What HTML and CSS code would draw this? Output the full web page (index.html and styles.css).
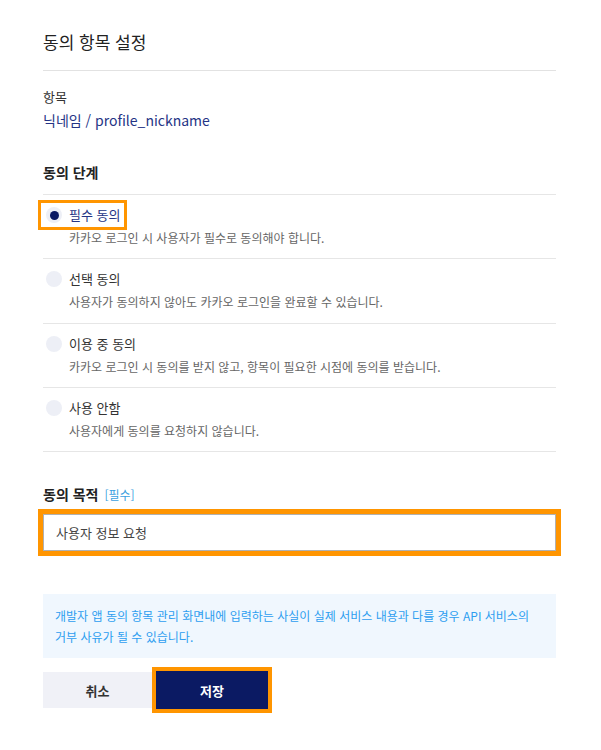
FILE: index.html
```html
<!DOCTYPE html>
<html lang="ko">
<head>
<meta charset="utf-8">
<title>동의 항목 설정</title>
<link rel="stylesheet" href="styles.css">
</head>
<body>
<div class="panel">
  <h1 class="title">동의 항목 설정</h1>

  <div class="item">
    <div class="item-label">항목</div>
    <div class="item-value">닉네임 / profile_nickname</div>
  </div>

  <h2 class="section-title">동의 단계</h2>
  <ul class="options">
    <li class="option">
      <div class="option-head highlight">
        <span class="radio checked"></span>
        <span class="option-title selected">필수 동의</span>
      </div>
      <p class="option-desc">카카오 로그인 시 사용자가 필수로 동의해야 합니다.</p>
    </li>
    <li class="option">
      <div class="option-head">
        <span class="radio"></span>
        <span class="option-title">선택 동의</span>
      </div>
      <p class="option-desc">사용자가 동의하지 않아도 카카오 로그인을 완료할 수 있습니다.</p>
    </li>
    <li class="option">
      <div class="option-head">
        <span class="radio"></span>
        <span class="option-title">이용 중 동의</span>
      </div>
      <p class="option-desc">카카오 로그인 시 동의를 받지 않고, 항목이 필요한 시점에 동의를 받습니다.</p>
    </li>
    <li class="option">
      <div class="option-head">
        <span class="radio"></span>
        <span class="option-title">사용 안함</span>
      </div>
      <p class="option-desc">사용자에게 동의를 요청하지 않습니다.</p>
    </li>
  </ul>

  <h2 class="section-title purpose">동의 목적 <span class="required">[필수]</span></h2>
  <div class="input-wrap">
    <div class="input">사용자 정보 요청</div>
  </div>

  <div class="notice">개발자 앱 동의 항목 관리 화면내에 입력하는 사실이 실제 서비스 내용과 다를 경우 API 서비스의 거부 사유가 될 수 있습니다.</div>

  <div class="actions">
    <button class="btn cancel" type="button">취소</button>
    <button class="btn save" type="button">저장</button>
  </div>
</div>
</body>
</html>
```

FILE: styles.css
```css
* { box-sizing: border-box; }
html, body { margin: 0; padding: 0; background: #fff; }
body {
  font-family: "Noto Sans CJK KR", "Noto Sans", sans-serif;
  color: #222;
}
.panel {
  width: 601px;
  padding: 29px 45px 0 43px;
}
.title {
  margin: 0;
  font-size: 17px;
  font-weight: 400;
  line-height: 26px;
  color: #222;
  padding-bottom: 15px;
  border-bottom: 1px solid #e2e2e2;
}
.item { padding-top: 16px; }
.item-label {
  font-size: 13px;
  line-height: 20px;
  color: #333;
}
.item-value {
  margin-top: 2px;
  font-size: 14px;
  line-height: 22px;
  color: #253485;
}
.section-title {
  margin: 31px 0 0;
  font-size: 14px;
  font-weight: 700;
  line-height: 20px;
  color: #222;
  padding-bottom: 12px;
}
.options {
  list-style: none;
  margin: 0;
  padding: 0;
  border-top: 1px solid #e6e6e6;
}
.option {
  height: 64px;
  border-bottom: 1px solid #e6e6e6;
  padding-top: 10px;
}
.option:nth-child(2) { height: 65px; }
.option-head {
  display: flex;
  align-items: center;
  gap: 7px;
  height: 20px;
  padding-left: 3px;
}
.highlight {
  width: fit-content;
  outline: 3px solid #ff9500;
  outline-offset: 2px;
  padding-right: 2px;
}
.radio {
  width: 16px;
  height: 16px;
  border-radius: 50%;
  background: #edeff6;
  display: flex;
  align-items: center;
  justify-content: center;
  flex: none;
}
.radio.checked::after {
  content: "";
  width: 9px;
  height: 9px;
  border-radius: 50%;
  background: #0b1a63;
}
.option-title {
  font-size: 13px;
  line-height: 20px;
  color: #333;
}
.option-title.selected { color: #253485; }
.option-desc {
  margin: 3px 0 0 26px;
  font-size: 12px;
  line-height: 20px;
  color: #666;
}
.purpose {
  margin-top: 32px;
  padding-bottom: 4px;
  display: flex;
  align-items: baseline;
  gap: 6px;
}
.required {
  font-size: 12px;
  font-weight: 400;
  color: #3b9fe0;
}
.input-wrap {
  margin: 0 -5px 0 -5px;
  border: 5px solid #ff9500;
}
.input {
  height: 37px;
  border: 1px solid #b0b0b0;
  padding: 0 12px;
  font-size: 13px;
  line-height: 35px;
  color: #444;
}
.notice {
  margin-top: 38px;
  background: #f0f7fe;
  padding: 11px 12px;
  font-size: 12px;
  line-height: 21px;
  color: #2d9ef0;
  word-break: keep-all;
}
.actions {
  margin-top: 9px;
  display: flex;
  align-items: center;
}
.btn {
  font-family: inherit;
  font-size: 13px;
  font-weight: 700;
  border: none;
  cursor: pointer;
}
.cancel {
  width: 109px;
  height: 36px;
  background: #f0f1f7;
  color: #333;
}
.save {
  width: 120px;
  height: 46px;
  background: #0b1a63;
  color: #fff;
  border: 4px solid #ff9500;
}
```
